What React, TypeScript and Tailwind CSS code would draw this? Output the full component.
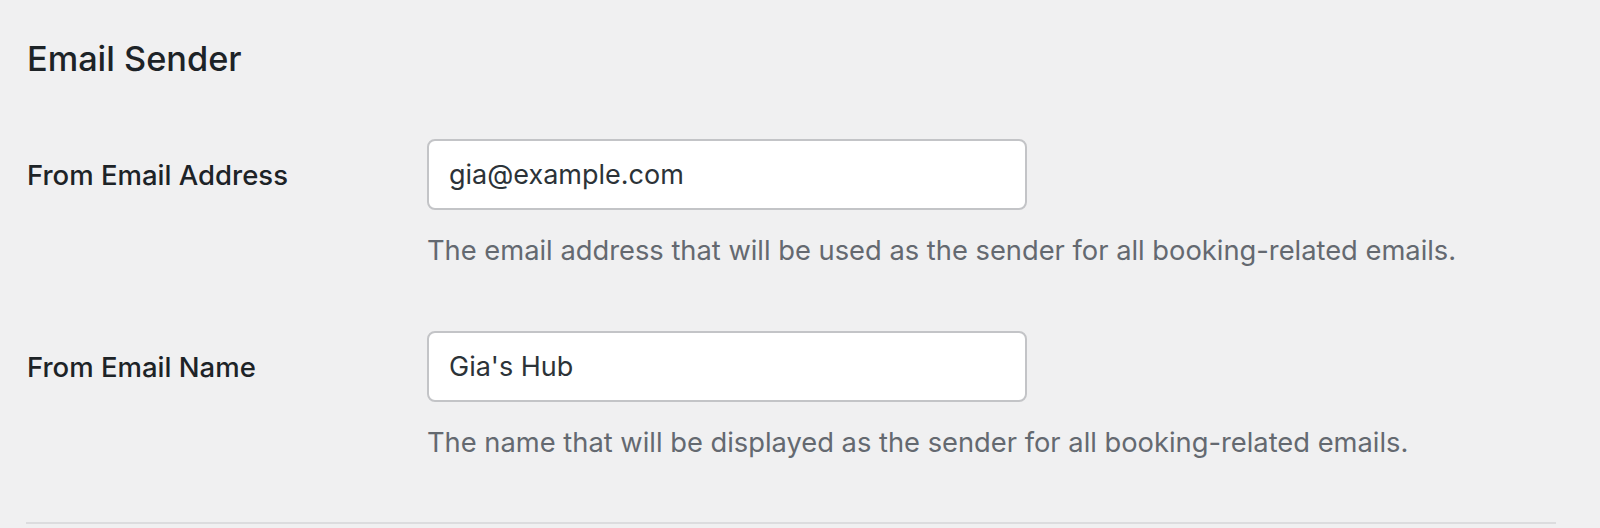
export default function App() {
  const fields = [
    {
      label: "From Email Address",
      value: "gia@example.com",
      help: "The email address that will be used as the sender for all booking-related emails.",
    },
    {
      label: "From Email Name",
      value: "Gia's Hub",
      help: "The name that will be displayed as the sender for all booking-related emails.",
    },
  ];

  return (
    <div className="w-full h-[528px] bg-[#f0f0f1] font-['Inter',sans-serif] pl-[26px] pr-[44px] pt-[39px] overflow-hidden">
      <h2 className="text-[34.3px] leading-[40px] font-medium text-[#1d2327] pl-[1px]">
        Email Sender
      </h2>

      <div className="mt-[60px] flex flex-col gap-[60px]">
        {fields.map((field) => (
          <div key={field.label} className="flex flex-row items-start">
            <label className="w-[401px] shrink-0 pl-[1px] text-[27.5px] leading-[71px] font-medium text-[#1d2327] pt-[1px]">
              {field.label}
            </label>
            <div className="flex flex-col">
              <input
                type="text"
                defaultValue={field.value}
                className="w-[600px] h-[71px] bg-white border-2 border-[#c3c4c7] rounded-[8px] px-[20px] text-[27px] text-[#2c3338] outline-none"
              />
              <p className="mt-[21px] text-[27.3px] leading-[40px] text-[#646970] whitespace-nowrap">
                {field.help}
              </p>
            </div>
          </div>
        ))}
      </div>

      <div className="mt-[59px] h-[2px] bg-[#dcdcde]" />
    </div>
  );
}
